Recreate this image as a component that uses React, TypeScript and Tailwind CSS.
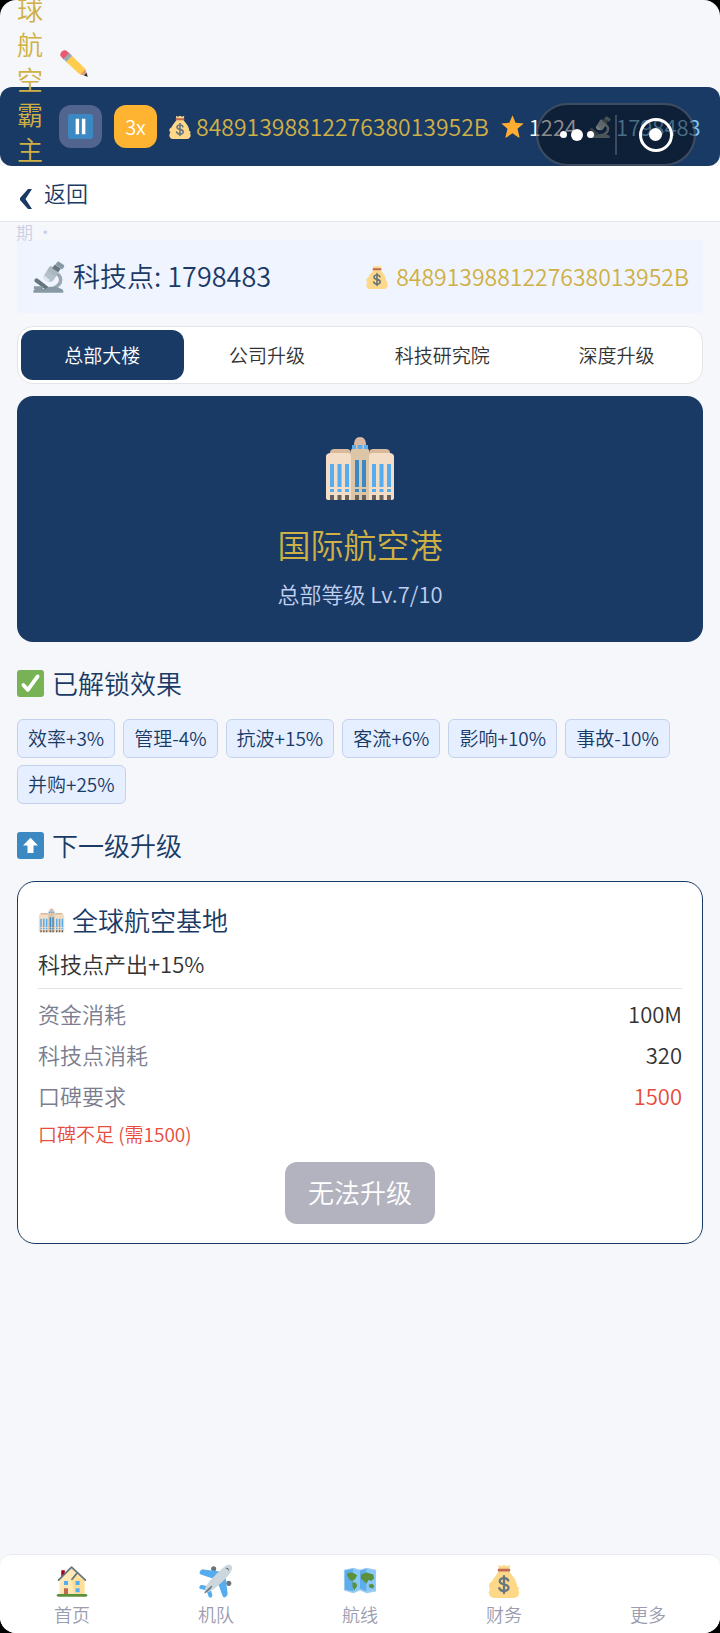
import React from "react";

interface IconProps {
  className?: string;
}

const PencilIcon: React.FC<IconProps> = ({ className }) => (
  <svg viewBox="0 0 36 36" className={className} aria-hidden="true">
    <path fill="#EA596E" d="M1.2 9.6C-.2 8 .1 5.600 1.900 3.600 3.600 1.600 6.500.7 8.300 2.200l4.400 3.900-7.600 7.700z" />
    <path fill="#99AAB5" d="M4.400 12.800l7.400-7.600 4.100 3.800-7.600 7.700z" />
    <path fill="#D99E82" d="M35.600 35.500l-3.200-10-7.100 7z" />
    <path fill="#FFCC4D" d="M8 16.600l7.600-7.600 17 16.700c-.4 1.800-1.400 2.100-2.600 2-.2 1.800-1 2.600-2.500 2.500.1 1.400-.6 2.200-2.200 2.400z" />
    <path fill="#292F33" d="M35.600 35.600l-1.500-5-3.300 3.400z" />
  </svg>
);

const PauseIcon: React.FC<IconProps> = ({ className }) => (
  <svg viewBox="0 0 36 36" className={className} aria-hidden="true">
    <rect width="36" height="36" rx="4" fill="#3B88C3" />
    <path fill="#fff" d="M11 7h5v22h-5zM20 7h5v22h-5z" />
  </svg>
);

const MoneyBagIcon: React.FC<IconProps> = ({ className }) => (
  <svg viewBox="2 0 32 36" className={className} aria-hidden="true">
    <path fill="#FDD888" d="M32 24c-.5-6.500-4-10-4-10l-5-7H13l-5 7s-1.500 1.500-2.600 4.300C3.400 19 2 20.800 2 23c0 1.400.6 2.700 1.600 3.600C2.600 27.500 2 28.800 2 30.300 2 33.500 4.300 36 7.500 36h21c3.300 0 5.500-2.400 5.500-5.500 0-1.200-.4-2.300-1-3.200 1.700-1 1-2.500-1-3.300zM12 1l3 1.500L18 1l3 1.500L24.500 1 23.500 6h-11z" />
    <path fill="#BF6952" d="M12.500 5h11c1.500 0 1.500 3 0 3h-11c-1.500 0-1.500-3 0-3z" />
    <path fill="none" stroke="#67757F" strokeWidth="2.400" strokeLinecap="round" d="M22.500 17.500c-.6-1.700-2.300-2.500-4.500-2.500-2.600 0-4.500 1.200-4.500 3.200 0 4.600 9.300 2.100 9.300 6.800 0 2.200-2 3.500-4.800 3.500-2.500 0-4.400-1-5-3M18 12.800v18" />
  </svg>
);

const StarIcon: React.FC<IconProps> = ({ className }) => (
  <svg viewBox="1 1 34 34" className={className} aria-hidden="true">
    <path fill="#FFAC33" d="M18 1.500l4.600 11 12 1-9.200 7.800 2.900 11.800c.2 1-.7 1.500-1.400 1.100L18 27.800 9.100 34.200c-.8.4-1.600-.2-1.400-1.100l2.900-11.800L1.400 13.500l12-1z" />
  </svg>
);

const MicroscopeIcon: React.FC<IconProps> = ({ className }) => (
  <svg viewBox="0 0 36 36" className={className} aria-hidden="true">
    <path fill="none" stroke="#99AAB5" strokeWidth="4" d="M26 14c5 2 6 7 4.500 10.500S25 30 21 32" />
    <path fill="#66757F" d="M2 20.500c1-1.500 2.500-1.500 3.500-.5l11.500 9c1 1 .8 2.300 0 3-1 .8-2 .5-3 0L2.300 23.500c-1-.8-1-2-.3-3z" />
    <path fill="#8899A6" d="M1 35.800c-1 0-1-4.300 2-4.300h11l4-2.500h8l6 2.500c2 0 3 4.300 1.500 4.300zM1 28.500h10v3H1z" />
    <path fill="#B4C1C9" d="M12.500 16l5.500-9c1-1.500 2.200-1.600 3.400-.9l6.300 4.300c1.200.8 1.300 2 .6 3.200l-5.500 8.300c-2.500 2.200-6.500 1.700-9.300-.4-2-1.700-2.500-3.700-1-5.500z" />
    <path fill="#AAB8C2" d="M19 6.500l9.300 6.300-3 4.700-9.400-6.200z" />
    <path fill="#E1E8ED" d="M12.500 16l6.500 5.500-2.200 2C13 22.800 10.500 19.500 12.500 16z" />
    <path fill="#66757F" d="M24.500 4l6.800 4.700-3 4-6.800-4.600z" />
    <path fill="#8899A6" d="M27 1.500c.7-1 1.800-1.100 2.700-.5l4.600 3.100c1 .7 1.200 1.800.5 2.700l-2 2.700-7.600-5.300z" />
  </svg>
);

const BuildingIcon: React.FC<IconProps> = ({ className }) => (
  <svg viewBox="0 0 72 66" className={className} aria-hidden="true">
    <path fill="#D9B99B" d="M6 17c0-3 2-4 4-4h13c2 0 4 1 4 4v3H6zM45 17c0-3 2-4 4-4h13c2 0 4 1 4 4v3H45z" />
    <path fill="#F3DDC7" d="M2 21c0-3 2-4 5-4h16c3 0 4 1 4 3v44H4c-1 0-2-1-2-2zM45 20c0-2 1-3 4-3h16c3 0 5 1 5 4v41c0 1-1 2-2 2H45z" />
    <path fill="#DDC5A8" d="M27 15c0-2 1-3 3-3h12c2 0 3 1 3 3v49H27z" />
    <path fill="#D9B8A4" d="M30 9c0-5 2-8 6-8s6 3 6 8z" />
    <path fill="#5DADEC" d="M28 9h16v4H28z" />
    <path fill="#DDC5A8" d="M32 9h1.500v4H32zM38.500 9H40v4h-1.500z" />
    <path fill="#55ACEE" d="M6 28h4v23H6zM13.500 28h4v23h-4zM21 28h4v23h-4zM48 28h4v23h-4zM55.500 28h4v23h-4zM63 28h4v23h-4zM6 53h4v3H6zM13.500 53h4v3h-4zM21 53h4v3h-4zM48 53h4v3h-4zM55.500 53h4v3h-4zM63 53h4v3h-4z" />
    <path fill="#3B88C3" d="M31 24h4v27h-4zM38 24h4v27h-4zM31 53h4v3h-4zM38 53h4v3h-4z" />
    <path fill="#66605C" d="M6 59h4v5H6zM13.500 59h4v5h-4zM21 59h4v5h-4zM31 59h4v5h-4zM38 59h4v5h-4zM48 59h4v5h-4zM55.500 59h4v5h-4zM63 59h4v5h-4z" />
  </svg>
);

const CheckIcon: React.FC<IconProps> = ({ className }) => (
  <svg viewBox="0 0 36 36" className={className} aria-hidden="true">
    <rect width="36" height="36" rx="4" fill="#77B255" />
    <path fill="none" stroke="#fff" strokeWidth="5" strokeLinecap="round" strokeLinejoin="round" d="M8.500 20l6 6.500L27.500 8.500" />
  </svg>
);

const UpIcon: React.FC<IconProps> = ({ className }) => (
  <svg viewBox="0 0 36 36" className={className} aria-hidden="true">
    <rect width="36" height="36" rx="4" fill="#3B88C3" />
    <path fill="#fff" d="M18 7.500l10 10.500h-6v10h-8V18H8z" />
  </svg>
);

const HouseIcon: React.FC<IconProps> = ({ className }) => (
  <svg viewBox="-1 -1 38 38" className={className} aria-hidden="true">
    <path fill="#A0041E" d="M6 6h4v9H6z" />
    <path fill="#FFE8B6" d="M4 16L17.500 3 32 17v16H4z" />
    <path fill="#FFD983" d="M18 17l5-6 9 6v16H20z" opacity=".6" />
    <path fill="none" stroke="#66757F" strokeWidth="2" strokeLinecap="round" strokeLinejoin="round" d="M3 17L17.500 2.500 33 17M18 16l5-6" />
    <path fill="#55ACEE" d="M9 18h4.500v4.500H9zM22 18h4.500v4.500H22zM22 26h4.500v4.500H22z" />
    <path fill="#C1694F" d="M9 26h4.500v7H9z" />
    <rect x="1" y="32.500" width="34" height="3" rx="1.500" fill="#5C913B" />
  </svg>
);

const PlaneIcon: React.FC<IconProps> = ({ className }) => (
  <svg viewBox="0 0 36 36" className={className} aria-hidden="true">
    <circle cx="15.500" cy="5" r="2.700" fill="#66757F" />
    <circle cx="31.500" cy="20.500" r="2.700" fill="#66757F" />
    <path fill="#55ACEE" d="M1 8c1-1.500 2-2.500 4-2.300L22 8l-6 8-14-5c-1.500-.6-1.800-1.800-1-3zM28 35c1.500-1 2.500-2 2.300-4L28 14l-8 6 5 14c.6 1.500 1.800 1.800 3 1zM.5 24c.5-1.500 1.500-2 3-1.800L11 24l-3 4-6-1.500c-1.500-.5-2-1.300-1.500-2.500zM12.500 35.500c1.300-.5 1.800-1.500 1.600-3L12 26l-4 2 2 6c.5 1.300 1.300 2 2.500 1.500z" />
    <path fill="#CCD6DD" d="M6 30c-1-3 3-10 9-16S27 2 30 1c3-.8 5.500.5 5 4-.5 3.500-6 10-12.500 16S9 31.500 6 30z" />
    <path fill="#66757F" d="M5.500 31c0-1 7-8 8-8s.5 1-1 3-6.500 6-7 5zM28 4.500c2-1.500 4.500 1 3.500 3-.8-1.500-2-2.500-3.500-3z" />
  </svg>
);

const MapIcon: React.FC<IconProps> = ({ className }) => (
  <svg viewBox="0 0 36 36" className={className} aria-hidden="true">
    <path fill="#9FCDF0" d="M1 6l10-2 7 2 7-2 10 2v23l-10 2-7-3-7 3-10-3z" />
    <path fill="#5DADEC" d="M2 7l9-2v24l-9-2zM18 7l7-2v24l-7-3z" />
    <path fill="#88C9F9" d="M11 5l7 2v19l-7 3zM25 5l9 2v20l-9 2z" />
    <path fill="#5C913B" d="M4 11c2-2 5-2.500 8-1l3 2-2 4-3 2-3-1zM10 19l4 1 1 3-3 5-2-4zM19 11l6-2 7 2 1 4-3 3-3-1-2 4-3-3-3-2zM27 22l4-1 2 2-1 3-4-1z" />
  </svg>
);

const ChevronIcon: React.FC<IconProps> = ({ className }) => (
  <svg viewBox="0 0 12 20" className={className} aria-hidden="true">
    <path fill="#1A3A66" d="M8 0h4L5.500 10 12 20H8L0 11V9z" />
  </svg>
);

const tabs = ["总部大楼", "公司升级", "科技研究院", "深度升级"];

const effects = ["效率+3%", "管理-4%", "抗波+15%", "客流+6%", "影响+10%", "事故-10%", "并购+25%"];

const costs = [
  { label: "资金消耗", value: "100M", lacking: false },
  { label: "科技点消耗", value: "320", lacking: false },
  { label: "口碑要求", value: "1500", lacking: true },
];

const navItems = [
  { label: "首页", icon: HouseIcon },
  { label: "机队", icon: PlaneIcon },
  { label: "航线", icon: MapIcon },
  { label: "财务", icon: MoneyBagIcon },
  { label: "更多", icon: null },
];

const MONEY = "8489139881227638013952B";

// The narrow title column wraps to one character per line and spills out of the bar
const TitleColumn: React.FC = () => (
  <div className="pointer-events-none absolute -top-24 left-4 z-10">
    <div className="flex items-start gap-4">
      <h1 className="w-7 text-center text-[26px] leading-[35px] break-all text-[#cfb045]">球航空霸主</h1>
      <PencilIcon className="mt-[58px] h-7 w-7" />
    </div>
    <p className="mt-[54px] text-[17px] leading-6 text-[#c9d0e6]">期 ·</p>
  </div>
);

const Capsule: React.FC = () => (
  <div className="absolute top-4 right-6 z-20 flex h-[63px] w-40 items-center rounded-full border-2 border-white/20 bg-black/45">
    <button type="button" aria-label="菜单" className="flex flex-1 items-center justify-center gap-1">
      <span className="h-[7px] w-[7px] rounded-full bg-white" />
      <span className="h-3 w-3 rounded-full bg-white" />
      <span className="h-[7px] w-[7px] rounded-full bg-white" />
    </button>
    <span className="h-10 w-0.5 bg-white/20" />
    <button type="button" aria-label="关闭" className="flex flex-1 items-center justify-center">
      <span className="flex h-[34px] w-[34px] items-center justify-center rounded-full border-[3px] border-white">
        <span className="h-[13px] w-[13px] rounded-full bg-white" />
      </span>
    </button>
  </div>
);

const Header: React.FC = () => (
  <header className="relative mt-[87px] flex h-[79px] items-center gap-3 rounded-xl bg-[#1a3a66] pl-[59px] text-[22px]">
    <TitleColumn />
    <button type="button" aria-label="暂停" className="flex h-[43px] w-[43px] shrink-0 items-center justify-center rounded-xl bg-[#52658f]">
      <PauseIcon className="h-[25px] w-[25px]" />
    </button>
    <button type="button" className="h-[43px] w-[43px] shrink-0 rounded-xl bg-[#ffb431] text-[20px] text-white">
      3x
    </button>
    <span className="flex items-center gap-[5px] text-[23px] text-[#cfb045]">
      <MoneyBagIcon className="h-6 w-[22px] shrink-0" />
      {MONEY}
    </span>
    <span className="flex items-center gap-[5px] text-white">
      <StarIcon className="h-[23px] w-[23px] shrink-0" />
      1224
    </span>
    <span className="flex items-center gap-[5px] text-[#81c8f5]">
      <MicroscopeIcon className="h-[22px] w-[22px] shrink-0" />
      1798483
    </span>
    <Capsule />
  </header>
);

const App: React.FC = () => {
  return (
    <div className="min-h-screen bg-black font-['Noto_Sans_CJK_SC_DemiLight','Noto_Sans_CJK_SC',sans-serif]">
      <div className="flex min-h-screen flex-col overflow-hidden rounded-2xl bg-[#f5f7fb]">
        <Header />

        <div className="h-14 border-b border-[#e6e8ef] bg-white px-5">
          <button type="button" className="flex h-full items-center gap-3 pb-0.5 text-[22px] text-[#1a3a66]">
            <ChevronIcon className="mt-3 h-5 w-3" />
            返回
          </button>
        </div>

        <main className="flex-1 px-[17px] pt-[18px]">
          <section className="flex h-[73px] items-center justify-between bg-[#f0f4ff] pr-[14px] pl-4">
            <span className="flex items-center gap-2 text-[27px] text-[#1a3a66]">
              <MicroscopeIcon className="h-8 w-8" />
              科技点: 1798483
            </span>
            <span className="flex items-center gap-2 text-[23px] text-[#cfb045]">
              <MoneyBagIcon className="h-6 w-[22px]" />
              {MONEY}
            </span>
          </section>

          <div role="tablist" className="mt-[13px] grid h-[58px] grid-cols-[163fr_167fr_184fr_165fr] rounded-2xl border border-[#e6e4e8] bg-white p-[3px] text-[19px] text-[#333333]">
            {tabs.map((tab, index) => (
              <button
                key={tab}
                type="button"
                role="tab"
                aria-selected={index === 0}
                className={index === 0 ? "rounded-xl bg-[#1a3a66] text-white" : "rounded-xl"}
              >
                {tab}
              </button>
            ))}
          </div>

          <section className="mt-3 flex h-[246px] flex-col items-center rounded-2xl bg-[#1a3a66] pt-10">
            <BuildingIcon className="h-[66px] w-[72px]" />
            <h2 className="mt-[18px] text-[33px] leading-[48px] text-[#cfb045]">国际航空港</h2>
            <p className="mt-[7px] text-[22px] leading-9 text-[#c0d0f0]">总部等级 Lv.7/10</p>
          </section>

          <h3 className="mt-[23px] flex items-center gap-2 text-[26px] leading-9 text-[#1a3a66]">
            <CheckIcon className="h-[27px] w-[27px]" />
            已解锁效果
          </h3>
          <ul className="mt-[18px] flex flex-wrap gap-x-2 gap-y-[7px]">
            {effects.map((effect) => (
              <li
                key={effect}
                className="flex h-[39px] items-center rounded-md border border-[#c3d2ec] bg-[#e6efff] px-[10px] text-[19px] text-[#1a3a66]"
              >
                {effect}
              </li>
            ))}
          </ul>

          <h3 className="mt-[23px] flex items-center gap-2 text-[26px] leading-9 text-[#1a3a66]">
            <UpIcon className="h-[27px] w-[27px]" />
            下一级升级
          </h3>
          <section className="mt-[18px] rounded-[18px] border border-[#1a3a66] bg-white px-5 pt-5 pb-[19px]">
            <h4 className="flex items-center gap-[7px] text-[26px] leading-9 text-[#1a3a66]">
              <BuildingIcon className="h-[27px] w-[27px]" />
              全球航空基地
            </h4>
            <p className="mt-[7px] border-b border-[#e0e2e6] pb-[7px] text-[22px] leading-9 text-[#333333]">科技点产出+15%</p>
            <dl className="mt-1 text-[22px] leading-[41px]">
              {costs.map((cost) => (
                <div key={cost.label} className="flex justify-between">
                  <dt className="text-[#7b7d90]">{cost.label}</dt>
                  <dd className={cost.lacking ? "text-[#e74c3c]" : "text-[#333333]"}>{cost.value}</dd>
                </div>
              ))}
            </dl>
            <p className="mt-1 text-[19px] leading-7 text-[#e74c3c]">口碑不足 (需1500)</p>
            <button type="button" disabled className="mx-auto mt-[14px] block h-[62px] w-[150px] rounded-xl bg-[#b2b3bf] pb-1 text-[26px] text-white">
              无法升级
            </button>
          </section>
        </main>

        <nav className="grid h-[79px] grid-cols-5 rounded-t-xl border-t border-[#e8e9f0] bg-white">
          {navItems.map(({ label, icon: Icon }) => (
            <a key={label} href="#" className="flex flex-col items-center justify-end pb-[5px] text-[18px] leading-7 text-[#9a9db0]">
              {Icon && <Icon className="mb-[2px] h-[34px] w-[34px]" />}
              {label}
            </a>
          ))}
        </nav>
      </div>
    </div>
  );
};

export default App;
